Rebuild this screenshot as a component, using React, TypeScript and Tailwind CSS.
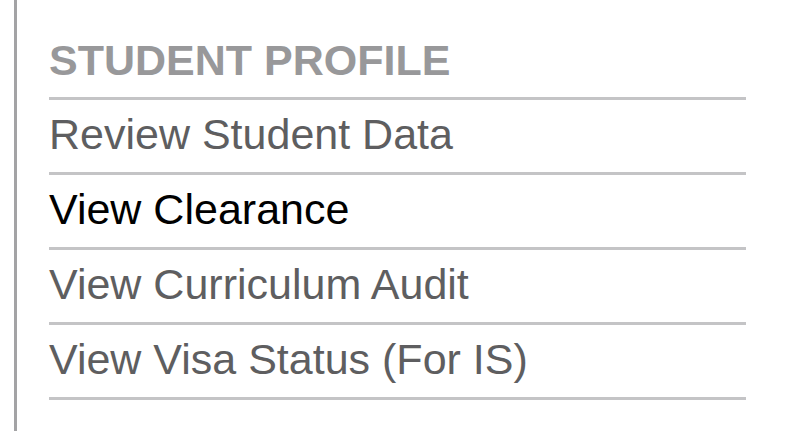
const links = [
  { label: "Review Student Data", active: false },
  { label: "View Clearance", active: true },
  { label: "View Curriculum Audit", active: false },
  { label: "View Visa Status (For IS)", active: false },
];

export default function App() {
  return (
    <div className="h-[431px] bg-white pl-[14px] overflow-hidden font-['Liberation_Sans',Arial,sans-serif]">
      <div className="h-full border-l-[3px] border-[#a3a3a5] pl-[32px] pr-[42px] pt-[36px]">
        {/* Heading */}
        <h2 className="text-[43px] leading-[48px] font-bold text-[#98989a] pb-[13px] border-b-[3px] border-[#c4c4c6]">
          STUDENT PROFILE
        </h2>

        {/* Links */}
        <ul>
          {links.map((link) => (
            <li
              key={link.label}
              className={`text-[43px] leading-[48px] pt-[10px] pb-[14px] border-b-[3px] border-[#c4c4c6] ${
                link.active ? "text-black" : "text-[#5e5e60]"
              }`}
            >
              {link.label}
            </li>
          ))}
        </ul>
      </div>
    </div>
  );
}
